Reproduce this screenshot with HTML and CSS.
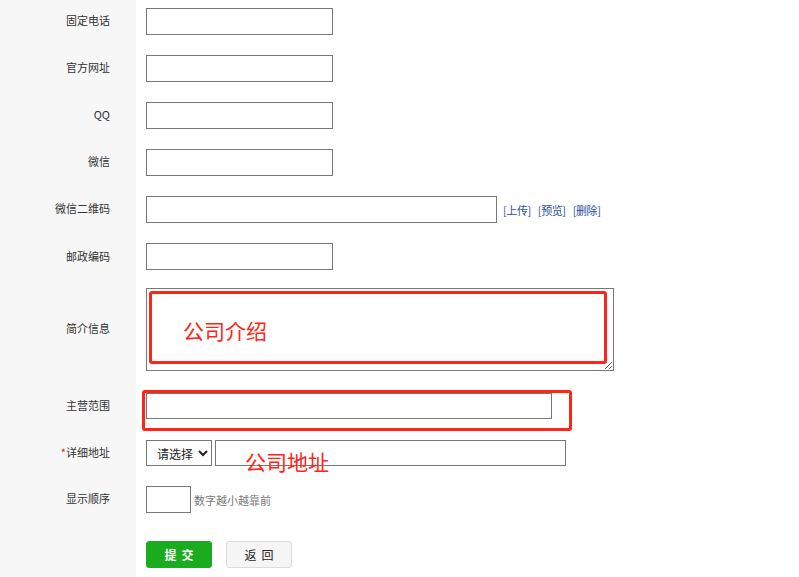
FILE: index.html
```html
<!DOCTYPE html>
<html lang="zh-CN">
<head>
<meta charset="utf-8">
<title>公司信息</title>
<link rel="stylesheet" href="styles.css">
</head>
<body>
<div class="page">
  <form class="form">
    <div class="row">
      <div class="label">固定电话</div>
      <div class="field"><input class="txt" type="text"></div>
    </div>
    <div class="row">
      <div class="label">官方网址</div>
      <div class="field"><input class="txt" type="text"></div>
    </div>
    <div class="row">
      <div class="label">QQ</div>
      <div class="field"><input class="txt" type="text"></div>
    </div>
    <div class="row">
      <div class="label">微信</div>
      <div class="field"><input class="txt" type="text"></div>
    </div>
    <div class="row">
      <div class="label">微信二维码</div>
      <div class="field">
        <input class="txt txt-wide" type="text">
        <span class="links"><a href="#">[上传]</a><a href="#">[预览]</a><a href="#">[删除]</a></span>
      </div>
    </div>
    <div class="row row-pre-area">
      <div class="label">邮政编码</div>
      <div class="field"><input class="txt" type="text"></div>
    </div>
    <div class="row row-area">
      <div class="label">简介信息</div>
      <div class="field"><textarea class="area"></textarea></div>
    </div>
    <div class="row row-scope">
      <div class="label">主营范围</div>
      <div class="field"><input class="txt txt-scope" type="text"></div>
    </div>
    <div class="row row-addr">
      <div class="label"><span class="req">*</span>详细地址</div>
      <div class="field">
        <select class="sel"><option>请选择</option></select>
        <input class="txt txt-addr" type="text">
      </div>
    </div>
    <div class="row">
      <div class="label">显示顺序</div>
      <div class="field">
        <input class="txt txt-order" type="text">
        <span class="hint">数字越小越靠前</span>
      </div>
    </div>
    <div class="row row-btns">
      <div class="label"></div>
      <div class="field">
        <button type="button" class="btn btn-submit">提交</button>
        <button type="button" class="btn btn-back">返回</button>
      </div>
    </div>
  </form>

  <div class="mark mark-intro"></div>
  <div class="mark-text mark-text-intro">公司介绍</div>
  <div class="mark mark-scope"></div>
  <div class="mark-text mark-text-addr">公司地址</div>
</div>
</body>
</html>
```

FILE: styles.css
```css
* { box-sizing: border-box; }

html, body {
  margin: 0;
  padding: 0;
  background: #fff;
}

body {
  font-family: "Noto Sans CJK SC", "Noto Sans", "Liberation Sans", sans-serif;
  font-size: 11px;
  color: #333;
  overflow: hidden;
}

.page {
  position: relative;
  width: 799px;
  height: 577px;
  overflow: hidden;
}

.form {
  display: flex;
  flex-direction: column;
}

.row {
  display: grid;
  grid-template-columns: 136px 1fr;
}

.label {
  background: #f7f7f7;
  display: flex;
  align-items: center;
  justify-content: flex-end;
  padding: 7px 26px 13px 0;
  line-height: 1;
  color: #333;
}

.field {
  display: flex;
  align-items: center;
  padding: 8px 0 12px 10px;
}

.row-pre-area .label,
.row-pre-area .field { padding-bottom: 11px; }

.row-area .field { padding-top: 7px; padding-bottom: 14px; }
.row-area .label { padding-top: 6px; padding-bottom: 15px; }

.row-scope .field { padding-top: 8px; }
.row-scope .label { padding-top: 7px; }

.row-addr .field { padding-top: 9px; }
.row-addr .label { padding-top: 8px; }

.row-btns .label,
.row-btns .field { padding-top: 16px; padding-bottom: 30px; }

.txt {
  height: 27px;
  width: 187px;
  border: 1px solid #777;
  background: #fff;
  padding: 0 4px;
  font: inherit;
  margin: 0;
  outline: none;
}

.txt-wide { width: 351px; }
.txt-scope { width: 406px; height: 26px; }
.txt-addr { width: 351px; height: 26px; margin-left: 3px; }
.txt-order { width: 45px; }

.links {
  display: flex;
  gap: 7px;
  margin-left: 6px;
}

.links a {
  color: #2b4f9c;
  text-decoration: none;
  font-size: 11px;
  letter-spacing: -0.4px;
}

.area {
  width: 468px;
  height: 83px;
  border: 1px solid #777;
  margin: 0;
  padding: 2px;
  font: inherit;
  outline: none;
}

.sel {
  width: 66px;
  height: 26px;
  border: 1px solid #777;
  border-radius: 0;
  background: #fff;
  font-family: inherit;
  font-size: 12px;
  color: #222;
  margin: 0;
  padding: 0 0 0 6px;
}

.req { color: #e02020; }

.hint {
  color: #777;
  margin-left: 3px;
  font-size: 11px;
}

.btn {
  height: 27px;
  width: 66px;
  border-radius: 3px;
  font-family: inherit;
  font-size: 12px;
  letter-spacing: 5px;
  padding: 0 0 0 5px;
  cursor: pointer;
  margin: 0;
}

.btn-submit {
  background: #1aab1e;
  border: 1px solid #1aab1e;
  color: #fff;
  font-weight: bold;
}

.btn-back {
  margin-left: 14px;
  background: #f5f5f5;
  border: 1px solid #dcdcdc;
  color: #222;
}

/* red annotation marks drawn over the form */
.mark {
  position: absolute;
  border: 3px solid #ff2416;
  border-radius: 3px;
}

.mark-intro {
  left: 149px;
  top: 291px;
  width: 458px;
  height: 73px;
}

.mark-scope {
  left: 142px;
  top: 390px;
  width: 430px;
  height: 41px;
}

.mark-text {
  position: absolute;
  color: #ff2416;
  font-size: 21px;
  line-height: 1;
  font-family: "Noto Sans CJK SC", sans-serif;
}

.mark-text-intro { left: 183px; top: 320px; }
.mark-text-addr { left: 245px; top: 451px; }
```
